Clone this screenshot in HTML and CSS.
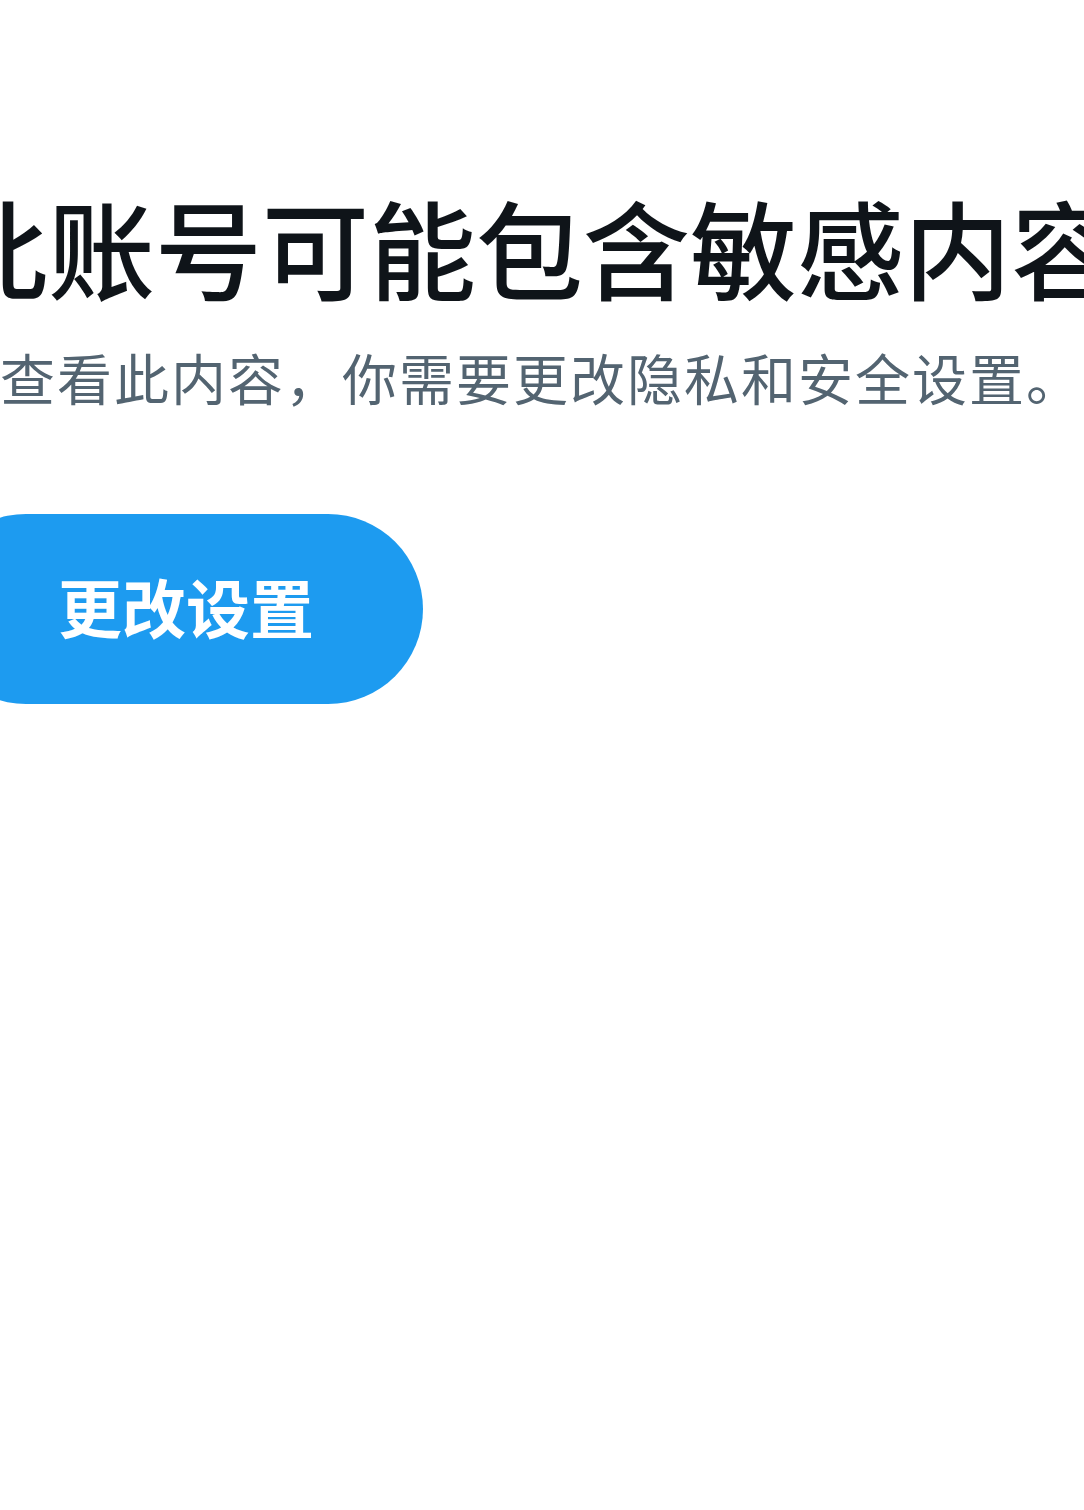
FILE: index.html
```html
<!DOCTYPE html>
<html lang="zh-CN">
<head>
<meta charset="utf-8">
<title>此账号可能包含敏感内容</title>
<link rel="stylesheet" href="styles.css">
</head>
<body>
<main class="notice">
  <h1 class="notice-title">此账号可能包含敏感内容</h1>
  <p class="notice-text">要查看此内容，你需要更改隐私和安全设置。</p>
  <button class="notice-button" type="button">更改设置</button>
</main>
</body>
</html>
```

FILE: styles.css
```css
html, body {
  margin: 0;
  padding: 0;
  background: #ffffff;
  overflow: hidden;
}

body {
  width: 1084px;
  height: 1510px;
  font-family: "Noto Sans CJK SC", "Noto Sans", sans-serif;
}

.notice {
  display: flex;
  flex-direction: column;
  align-items: flex-start;
  padding-top: 184px;
  margin-left: -59px;
}

.notice-title {
  margin: 0;
  font-size: 107px;
  font-weight: 500;
  line-height: 124px;
  color: #0f1419;
  white-space: nowrap;
}

.notice-text {
  margin: 33px 0 0 2px;
  font-size: 55px;
  font-weight: 400;
  line-height: 70px;
  letter-spacing: 2px;
  color: #536471;
  white-space: nowrap;
}

.notice-button {
  margin: 103px 0 0 -10px;
  width: 492px;
  height: 190px;
  border: 0;
  border-radius: 95px;
  background: #1d9bf0;
  color: #ffffff;
  font-family: inherit;
  font-size: 64px;
  font-weight: 700;
  display: flex;
  align-items: center;
  justify-content: flex-start;
  padding: 0 0 8px 127px;
}
```
